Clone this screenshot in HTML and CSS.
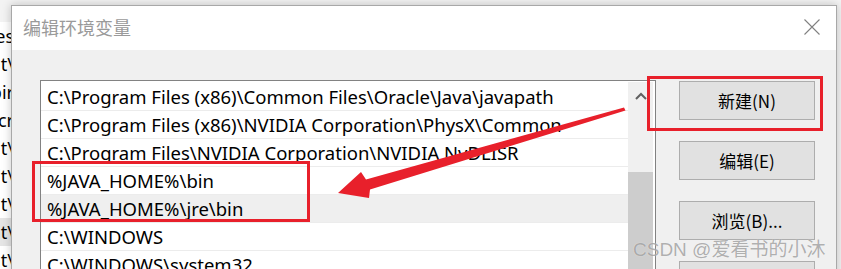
FILE: index.html
```html
<!DOCTYPE html>
<html lang="zh-CN">
<head>
    <meta charset="UTF-8">
    <title>编辑环境变量</title>
    <link rel="stylesheet" href="styles.css">
</head>
<body>
<div class="desk">

    <!-- окно позади диалога -->
    <div class="behind">
        <div class="behind-line"><span>Files</span></div>
        <div class="behind-line"><span>ment\</span></div>
        <div class="behind-line"><span>bir</span></div>
        <div class="behind-line"><span>Micr</span></div>
        <div class="behind-line"><span>Kit\</span></div>
        <div class="behind-line"><span>Kit\</span></div>
        <div class="behind-line"><span>Kit\</span></div>
        <div class="behind-line selected"><span>ent\</span></div>
        <div class="behind-line"><span>ent\</span></div>
    </div>

    <div class="dialog">
        <div class="titlebar">
            <span class="title">编辑环境变量</span>
            <svg class="close" width="16" height="16" viewBox="0 0 16 16">
                <path d="M0.5 0.5 L15.5 15.5 M15.5 0.5 L0.5 15.5" stroke="#808080" stroke-width="1.1" fill="none"/>
            </svg>
        </div>

        <div class="dialog-body">
            <div class="listbox">
                <ul class="paths">
                    <li>C:\Program Files (x86)\Common Files\Oracle\Java\javapath</li>
                    <li>C:\Program Files (x86)\NVIDIA Corporation\PhysX\Common</li>
                    <li>C:\Program Files\NVIDIA Corporation\NVIDIA NvDLISR</li>
                    <li>%JAVA_HOME%\bin</li>
                    <li class="selected">%JAVA_HOME%\jre\bin</li>
                    <li>C:\WINDOWS</li>
                    <li>C:\WINDOWS\system32</li>
                </ul>
                <div class="scrollbar">
                    <svg class="scroll-up" width="12" height="8" viewBox="0 0 12 8">
                        <path d="M1 7 L6 2 L11 7" stroke="#606060" stroke-width="2" fill="none"/>
                    </svg>
                    <div class="thumb"></div>
                </div>
            </div>

            <div class="actions">
                <button class="btn">新建(N)</button>
                <button class="btn">编辑(E)</button>
                <button class="btn">浏览(B)...</button>
                <button class="btn">删除(D)</button>
            </div>
        </div>
    </div>

    <!-- пометки поверх скриншота -->
    <div class="mark mark-new"></div>
    <div class="mark mark-java"></div>
    <svg class="arrow" width="841" height="269" viewBox="0 0 841 269">
        <polygon points="338,193 361,172 366,179.5 624,107.5 625.5,110.5 370,189.5 369,198" fill="#e8202b"/>
    </svg>
    <div class="watermark">CSDN @爱看书的小沐</div>
</div>
</body>
</html>
```

FILE: styles.css
```css
body {
    margin: 0;
    background-color: #ffffff;
    font-family: "Noto Sans", "Noto Sans CJK SC", sans-serif;
    overflow: hidden;
}

.desk {
    position: relative;
    width: 841px;
    height: 269px;
    overflow: hidden;
    background-color: #f3f3f3;
}

/* окно на заднем плане */
.behind {
    position: absolute;
    left: 0;
    top: 22px;
    width: 14px;
    background-color: #ffffff;
    font-size: 18px;
    color: #000;
}

.behind-line {
    height: 28px;
    line-height: 28px;
    display: flex;
    justify-content: flex-end;
    white-space: nowrap;
    overflow: hidden;
}

.behind-line span {
    flex-shrink: 0;
}

.behind-line.selected {
    background-color: #e5e5e5;
}

/* диалог */
.dialog {
    position: absolute;
    left: 11px;
    top: 5px;
    width: 824px;
    height: 300px;
    border: 1px solid #a8a8a8;
    background-color: #f0f0f0;
    box-shadow: 0 0 9px rgba(0, 0, 0, 0.22);
}

.titlebar {
    height: 44px;
    background-color: #ffffff;
    display: flex;
    align-items: center;
    justify-content: space-between;
    padding: 0 16px 0 11px;
}

.title {
    font-family: "Noto Sans CJK SC", sans-serif;
    font-size: 18px;
    color: #9a9a9a;
    margin-top: -2px;
}

.close {
    margin-top: -3px;
}

.dialog-body {
    display: flex;
    align-items: flex-start;
    padding: 30px 0 0 28px;
}

.listbox {
    width: 614px;
    height: 220px;
    border: 1px solid #828282;
    border-bottom: none;
    background-color: #ffffff;
    display: flex;
}

.paths {
    list-style: none;
    margin: 0;
    padding: 2px 0 0 0;
    width: 587px;
}

.paths li {
    height: 27px;
    line-height: 27px;
    border-bottom: 1px solid #ececec;
    padding-left: 6px;
    font-size: 18.5px;
    color: #000;
    white-space: nowrap;
}

.paths li.selected {
    background-color: #efefef;
}

.scrollbar {
    width: 25px;
    margin: 1px 1px 0 0;
    background-color: #f0f0f0;
    display: flex;
    flex-direction: column;
    align-items: center;
}

.scroll-up {
    margin-top: 10px;
}

.thumb {
    width: 25px;
    height: 120px;
    margin-top: 72px;
    background-color: #cdcdcd;
}

.actions {
    display: flex;
    flex-direction: column;
    gap: 21px;
    margin-left: 23px;
    padding-top: 1px;
}

.btn {
    width: 136px;
    height: 39px;
    border: 1px solid #adadad;
    background-color: #e1e1e1;
    font-family: "Noto Sans CJK SC", sans-serif;
    font-size: 17px;
    color: #000;
    padding: 0;
}

/* красные пометки */
.mark {
    position: absolute;
    border: 3px solid #e8202b;
}

.mark-new {
    left: 647px;
    top: 76px;
    width: 170px;
    height: 49px;
}

.mark-java {
    left: 32px;
    top: 161px;
    width: 272px;
    height: 55px;
}

.arrow {
    position: absolute;
    left: 0;
    top: 0;
}

.watermark {
    position: absolute;
    left: 633px;
    top: 234px;
    font-family: "Liberation Sans", "Noto Sans CJK SC", sans-serif;
    font-size: 19px;
    color: rgba(110, 110, 110, 0.55);
    text-shadow: 0 0 1px rgba(255, 255, 255, 0.8);
    white-space: nowrap;
}
```
